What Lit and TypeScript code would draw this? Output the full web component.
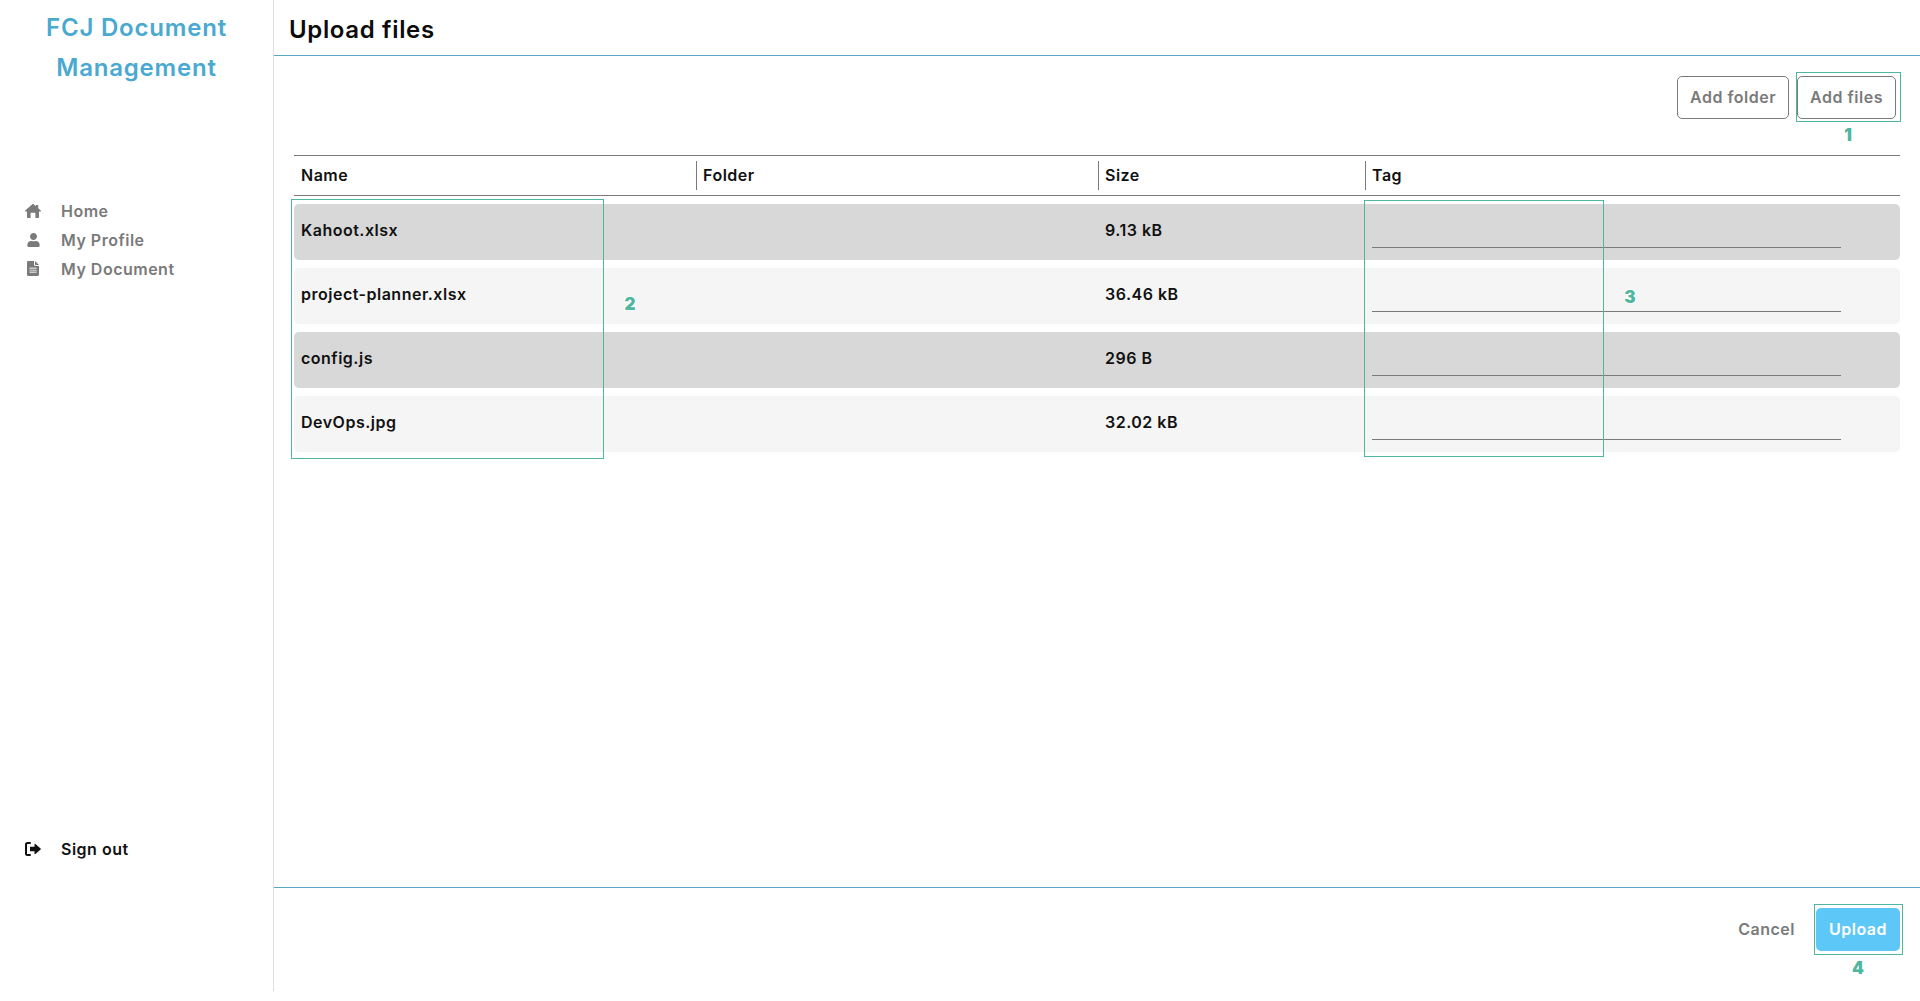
import { LitElement, html, css, svg } from "lit";
import { customElement } from "lit/decorators.js";

const icons = {
  home: svg`<svg class="ic" width="16" height="14" viewBox="0 0 16 14"><path d="M8 0c.3 0 .5.1.7.3l2.3 2V1h2.2v3.2l2.6 2.3c.4.4.1 1-.4 1H14V13c0 .6-.4 1-1 1h-2.6V9.2a.5.5 0 0 0-.5-.5H6.100a.5.5 0 0 0-.5.5V14H3c-.6 0-1-.4-1-1V7.500H.6c-.5 0-.8-.6-.4-1L7.300.3C7.500.1 7.700 0 8 0z"/></svg>`,
  user: svg`<svg class="ic" width="13" height="14" viewBox="0 0 448 512"><path d="M224 256c70.700 0 128-57.300 128-128S294.700 0 224 0 96 57.300 96 128s57.300 128 128 128zm89.600 32h-16.700c-22.200 10.200-46.900 16-72.900 16s-50.600-5.800-72.900-16h-16.700C60.200 288 0 348.200 0 422.400V464c0 26.500 21.500 48 48 48h352c26.500 0 48-21.500 48-48v-41.600c0-74.200-60.200-134.400-134.400-134.400z"/></svg>`,
  file: svg`<svg class="ic" width="12" height="15" viewBox="0 0 12 15"><path d="M1.200 0H7v3.600c0 .8.600 1.400 1.400 1.400H12v8.800c0 .7-.5 1.200-1.200 1.200H1.200C.5 15 0 14.500 0 13.800V1.200C0 .5.500 0 1.200 0zM8 0l4 4H8z"/><rect x="2.500" y="6.500" width="7" height="5.500" fill="#cfcfcf"/><path d="M2.500 8.500h7M2.500 10.300h7" stroke="#7a7a7a" stroke-width=".7"/></svg>`,
  signout: svg`<svg class="ic" width="16" height="14" viewBox="0 0 16 14"><path d="M5 1H2.500A1.500 1.500 0 0 0 1 2.500v9A1.500 1.500 0 0 0 2.500 13H5" fill="none" stroke="currentColor" stroke-width="2" stroke-linecap="round"/><path d="M5 4.800h4.500V2.300c0-.5.500-.7.900-.4l5.200 4.500c.4.300.4.900 0 1.200l-5.200 4.500c-.4.300-.9.100-.9-.4V9.200H5z"/></svg>`,
};

const files = [
  { name: "Kahoot.xlsx", size: "9.13 kB" },
  { name: "project-planner.xlsx", size: "36.46 kB" },
  { name: "config.js", size: "296 B" },
  { name: "DevOps.jpg", size: "32.02 kB" },
];

@customElement("app-root")
export class AppRoot extends LitElement {
  static styles = css`
    :host {
      display: flex;
      position: relative;
      height: 1001px;
      background: #fff;
      font-family: Inter, "Liberation Sans", sans-serif;
      font-weight: 600;
      font-size: 16px;
      letter-spacing: 0.5px;
      color: #111;
      overflow: hidden;
    }
    .side {
      width: 274px;
      box-sizing: border-box;
      height: 991px;
      flex: none;
      border-right: 1px solid #e0e0e0;
      display: flex;
      flex-direction: column;
      align-items: stretch;
    }
    .logo {
      padding-top: 8px;
      text-align: center;
      font-size: 24px;
      line-height: 40px;
      letter-spacing: 0.8px;
      color: #4aa9d0;
    }
    .nav {
      margin-top: 108px;
      display: flex;
      flex-direction: column;
    }
    .item {
      height: 29px;
      display: flex;
      align-items: center;
      color: #7a7a7a;
      padding-left: 25px;
    }
    .item.out {
      color: #111;
      margin-top: auto;
      margin-bottom: 128px;
    }
    .icbox {
      width: 16px;
      height: 16px;
      margin-right: 20px;
      display: flex;
      align-items: center;
      justify-content: center;
    }
    .ic {
      fill: currentColor;
      display: block;
    }
    .main {
      flex: 1;
      height: 991px;
      display: flex;
      flex-direction: column;
      min-width: 0;
    }
    .head {
      height: 51px;
      box-sizing: content-box;
      border-bottom: 1px solid #5ba5c6;
      display: flex;
      align-items: center;
      padding: 4px 15px 0;
      font-size: 24px;
      letter-spacing: 0.65px;
      color: #0c0c0c;
    }
    .body {
      flex: 1;
      padding: 20px 20px 0;
    }
    .tools {
      display: flex;
      justify-content: flex-end;
      gap: 8px;
      padding-right: 4px;
    }
    button {
      font: inherit;
      letter-spacing: inherit;
      height: 43px;
      border-radius: 5px;
      background: transparent;
      box-sizing: border-box;
      padding: 0 0 2px;
    }
    .ghost {
      border: 1px solid #7a7a7a;
      color: #7a7a7a;
    }
    .w1 { width: 112px; }
    .w2 { width: 99px; }
    .thead, .row {
      display: grid;
      grid-template-columns: 402px 402px 267px 1fr;
    }
    .thead {
      margin-top: 36px;
      height: 41px;
      box-sizing: border-box;
      border-top: 1px solid #7a7a7a;
      border-bottom: 1px solid #7a7a7a;
      align-items: center;
    }
    .th {
      height: 29px;
      line-height: 29px;
      padding-left: 6px;
      border-left: 1px solid #7a7a7a;
    }
    .th:first-child {
      border-left: none;
      padding-left: 7px;
    }
    .rows {
      margin-top: 8px;
      display: flex;
      flex-direction: column;
      gap: 8px;
    }
    .row {
      height: 56px;
      border-radius: 5px;
      align-items: center;
      background: #f5f5f5;
    }
    .row:nth-child(odd) { background: #d8d8d8; }
    .td { padding: 0 0 5px 7px; }
    .td.tag {
      padding: 0 0 12px 7px;
      align-self: stretch;
      display: flex;
      align-items: flex-end;
    }
    input {
      width: 469px;
      height: 30px;
      box-sizing: border-box;
      border: none;
      border-bottom: 1px solid #7a7a7a;
      background: transparent;
      outline: none;
      padding: 0;
    }
    .foot {
      height: 104px;
      box-sizing: border-box;
      border-top: 1px solid #5ba5c6;
      display: flex;
      justify-content: flex-end;
      align-items: flex-start;
      padding: 20px 20px 0 0;
      gap: 21px;
    }
    .cancel {
      border: none;
      color: #7a7a7a;
    }
    .upload {
      width: 84px;
      border: none;
      background: #5dc7f7;
      color: #fff;
    }
    .box {
      position: absolute;
      box-sizing: border-box;
      border: 1px solid #4fb6a0;
      pointer-events: none;
    }
    .num {
      position: absolute;
      transform: translate(-50%, -50%);
      font-size: 17px;
      font-weight: 900;
      color: #4fb6a0;
      letter-spacing: 0;
      text-shadow: 0 0 2px #fff, 0 0 3px #fff, 0 0 3px #fff, 0 0 3px #fff;
      line-height: 1;
    }
    .b1 { left: 1796px; top: 72px; width: 105px; height: 50px; }
    .b2 { left: 291px; top: 199px; width: 313px; height: 260px; }
    .b3 { left: 1364px; top: 200px; width: 240px; height: 257px; }
    .b4 { left: 1814px; top: 904px; width: 89px; height: 51px; }
    .n1 { left: 1848px; top: 135px; }
    .n2 { left: 630px; top: 304px; }
    .n3 { left: 1630px; top: 297px; }
    .n4 { left: 1858px; top: 968px; }
  `;

  render() {
    return html`
      <aside class="side">
        <div class="logo">FCJ Document<br />Management</div>
        <nav class="nav">
          <div class="item"><span class="icbox">${icons.home}</span>Home</div>
          <div class="item"><span class="icbox">${icons.user}</span>My Profile</div>
          <div class="item"><span class="icbox">${icons.file}</span>My Document</div>
        </nav>
        <div class="item out"><span class="icbox">${icons.signout}</span>Sign out</div>
      </aside>
      <main class="main">
        <header class="head">Upload files</header>
        <section class="body">
          <div class="tools">
            <button class="ghost w1">Add folder</button>
            <button class="ghost w2">Add files</button>
          </div>
          <div class="thead">
            <div class="th">Name</div>
            <div class="th">Folder</div>
            <div class="th">Size</div>
            <div class="th">Tag</div>
          </div>
          <div class="rows">
            ${files.map(
              (f) => html`<div class="row">
                <div class="td">${f.name}</div>
                <div class="td"></div>
                <div class="td">${f.size}</div>
                <div class="td tag"><input type="text" /></div>
              </div>`
            )}
          </div>
        </section>
        <footer class="foot">
          <button class="cancel">Cancel</button>
          <button class="upload">Upload</button>
        </footer>
      </main>
      <div class="box b1"></div>
      <div class="box b2"></div>
      <div class="box b3"></div>
      <div class="box b4"></div>
      <span class="num n1">1</span>
      <span class="num n2">2</span>
      <span class="num n3">3</span>
      <span class="num n4">4</span>
    `;
  }
}
